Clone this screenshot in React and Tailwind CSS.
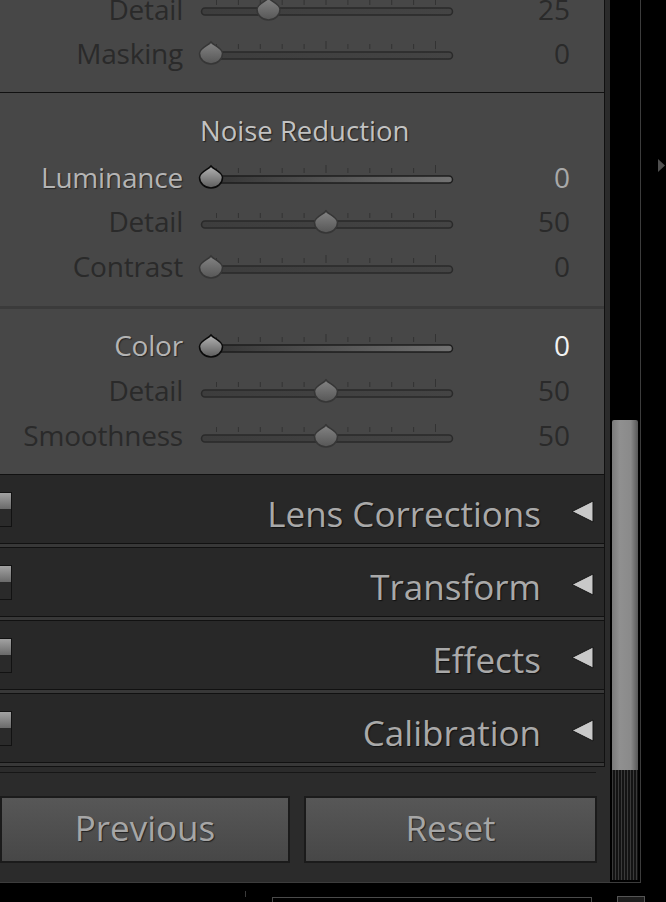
import React from 'react';

// ── Data ───────────────────────────────────────────────────────────────────────

const SHARPEN_ROWS = [
  { label: 'Detail',  value: 25 },
  { label: 'Masking', value: 0 },
];

const LUMA_ROWS = [
  { label: 'Luminance', value: 0,  active: true, valueCls: 'text-[#a9a9a9]' },
  { label: 'Detail',    value: 50 },
  { label: 'Contrast',  value: 0 },
];

const COLOR_ROWS = [
  { label: 'Color',      value: 0,  active: true, valueCls: 'text-[#f2f2f2]' },
  { label: 'Detail',     value: 50 },
  { label: 'Smoothness', value: 50 },
];

const PANELS = ['Lens Corrections', 'Transform', 'Effects', 'Calibration'];

const TICKS = Array.from({ length: 11 }, (_, i) => i);

// ── Slider (drawn) ─────────────────────────────────────────────────────────────

function Slider({ value, active, id }) {
  const cx = 13 + value * 2.3;
  return (
    <svg width="260" height="30" viewBox="0 0 260 30" className="block">
      <defs>
        <linearGradient id={`thumb-${id}`} x1="0" y1="0" x2="0" y2="1">
          <stop offset="0" stopColor={active ? '#b4b4b4' : '#848484'} />
          <stop offset="1" stopColor={active ? '#5c5c5c' : '#565656'} />
        </linearGradient>
        <linearGradient id={`track-${id}`} x1="0" y1="0" x2="1" y2="0">
          <stop offset="0" stopColor={active ? '#333333' : '#3d3d3d'} />
          <stop offset="1" stopColor={active ? '#727272' : '#444444'} />
        </linearGradient>
      </defs>
      {TICKS.map((i) => {
        const x = 18.5 + i * 21.9;
        const tall = i === 5 || i === 10;
        return (
          <line key={i} x1={x} x2={x} y1={tall ? 2 : 5} y2={10} stroke="#333333" strokeWidth="1" />
        );
      })}
      <rect
        x="3.5" y="13" width="251" height="7" rx="3.5"
        fill={`url(#track-${id})`}
        stroke={active ? '#1e1e1e' : '#2a2a2a'}
        strokeWidth="1.5"
      />
      <g transform={`translate(${cx},0)`}>
        <path
          d="M0 3C2.5 6.5 11.5 9 11.5 14.5A11.5 10.5 0 0 1-11.5 14.5C-11.5 9-2.5 6.5 0 3Z"
          fill={`url(#thumb-${id})`}
          stroke={active ? '#0a0a0a' : '#363636'}
          strokeWidth="1.5"
        />
      </g>
    </svg>
  );
}

function SliderRow({ row, id, h = 'h-[45px]' }) {
  const labelCls = row.active
    ? 'text-[#b4b4b4] [text-shadow:1px_1px_1px_#262626]'
    : 'text-[#2a2a2a]';
  return (
    <div className={`${h} flex items-center`}>
      <div className={`w-[183px] pb-[3px] text-right text-[28px] leading-none tracking-[-0.2px] ${labelCls}`}>
        {row.label}
      </div>
      <div className="ml-[15px]">
        <Slider value={row.value} active={row.active} id={id} />
      </div>
      <div className={`w-[112px] pb-[3px] text-right text-[28px] leading-none ${row.valueCls ?? 'text-[#2a2a2a]'}`}>
        {row.value}
      </div>
    </div>
  );
}

// ── Collapsed panel header ─────────────────────────────────────────────────────

function PanelHeader({ title }) {
  return (
    <>
      <div className="h-[68px] bg-[#282828] border-r border-[#111] flex">
        <div className="mt-[17px] w-[12px] h-[35px] flex flex-col border border-l-0 border-[#121212]">
          <div className="h-[16px] bg-[linear-gradient(#a2a2a2,#6a6a6a)]" />
          <div className="flex-1 bg-[#2a2a2a]" />
        </div>
        <div className="flex-1 flex items-center justify-end pt-2 text-[35px] leading-none text-[#a9a9a9] [text-shadow:1px_1px_1px_#111]">
          {title}
        </div>
        <div className="w-[63px] flex items-center pl-[30px] pt-1">
          <svg width="23" height="23" viewBox="0 0 23 23">
            <polygon points="22,1 22,22 1,11.5" fill="#c9c9c9" stroke="#151515" strokeWidth="1" />
          </svg>
        </div>
      </div>
      <div className="h-[5px] bg-[#383838] border-y border-[#111] border-r" />
    </>
  );
}

// ── Bottom buttons ─────────────────────────────────────────────────────────────

function PanelButton({ children, w }) {
  return (
    <div
      className={`${w} h-[67px] pb-[4px] border-2 border-[#1b1b1b] bg-[linear-gradient(180deg,#575757,#474747)] flex items-center justify-center text-[35px] leading-none text-[#a6a6a6] [text-shadow:1px_1px_1px_#222]`}
    >
      {children}
    </div>
  );
}

// ── Main ───────────────────────────────────────────────────────────────────────

export default function App() {
  return (
    <div className="w-[666px] h-[902px] bg-black overflow-hidden flex flex-col font-['Open_Sans',sans-serif]">
      <div className="h-[883px] flex">
        {/* Framed panel + scrollbar */}
        <div className="w-[641px] h-[883px] flex border-r border-b border-[#3c3c3c]">
          {/* Panel column */}
          <div className="w-[605px] flex flex-col">
            {/* Sharpening tail */}
            <div className="h-[93px] bg-[#474747] border-b border-r border-[#111] overflow-hidden">
              <div className="-mt-[12px]">
                {SHARPEN_ROWS.map((r, i) => (
                  <SliderRow key={i} row={r} id={`s${i}`} h="h-[44px]" />
                ))}
              </div>
            </div>

            {/* Noise reduction – luminance */}
            <div className="h-[213px] bg-[#474747] border-r border-[#111] pt-[19px]">
              <div className="h-[40px] pb-[3px] flex items-center pl-[200px] text-[27.5px] leading-none text-[#c2c2c2] [text-shadow:1px_1px_1px_#1e1e1e]">
                Noise Reduction
              </div>
              <div className="mt-[4px]">
                {LUMA_ROWS.map((r, i) => (
                  <SliderRow key={i} row={r} id={`l${i}`} h={i === 0 ? 'h-[44px]' : 'h-[45px]'} />
                ))}
              </div>
            </div>
            <div className="h-[3px] bg-[#3b3b3b] border-r border-[#111]" />

            {/* Noise reduction – color */}
            <div className="h-[166px] bg-[#474747] border-r border-b border-[#111] pt-[15px]">
              {COLOR_ROWS.map((r, i) => (
                <SliderRow key={i} row={r} id={`c${i}`} />
              ))}
            </div>

            {/* Collapsed panels */}
            {PANELS.map((p) => (
              <PanelHeader key={p} title={p} />
            ))}

            {/* Previous / Reset */}
            <div className="flex-1 bg-[#2b2b2b] pt-[5px]">
              <div className="w-[596px] h-px bg-[#161616]" />
              <div className="mt-[23px] flex gap-[14px]">
                <PanelButton w="w-[290px]">Previous</PanelButton>
                <PanelButton w="w-[293px]">Reset</PanelButton>
              </div>
            </div>
          </div>

          {/* Gutter */}
          <div className="w-[5px] bg-[#2b2b2b]" />

          {/* Scrollbar */}
          <div className="w-[30px] pl-[2px] pt-[420px]">
            <div className="w-[26px] h-[350px] rounded-t-[2px] bg-[linear-gradient(90deg,#7a7a7a,#909090_30%,#8a8a8a_72%,#585858)]" />
            <div className="w-[26px] h-[110px] bg-[repeating-linear-gradient(90deg,#3a3a3a_0px,#3a3a3a_1px,#141414_1px,#141414_3px)]" />
          </div>
        </div>

        {/* Right edge with collapse arrow */}
        <div className="w-[25px] pt-[159px] pl-[17px]">
          <svg width="7" height="13" viewBox="0 0 7 13">
            <polygon points="0,0 7,6.5 0,13" fill="#4f4f4f" />
          </svg>
        </div>
      </div>

      {/* Filmstrip edge */}
      <div className="h-[19px] flex items-end">
        <div className="ml-[245px] mb-[5px] w-px h-[6px] bg-[#3a3a3a]" />
        <div className="ml-[26px] w-[320px] h-[5px] border-t border-x border-[#4a4a4a]" />
        <div className="ml-[25px] w-[28px] h-[6px] border-t border-x border-[#555] bg-[#1e1e1e]" />
      </div>
    </div>
  );
}
